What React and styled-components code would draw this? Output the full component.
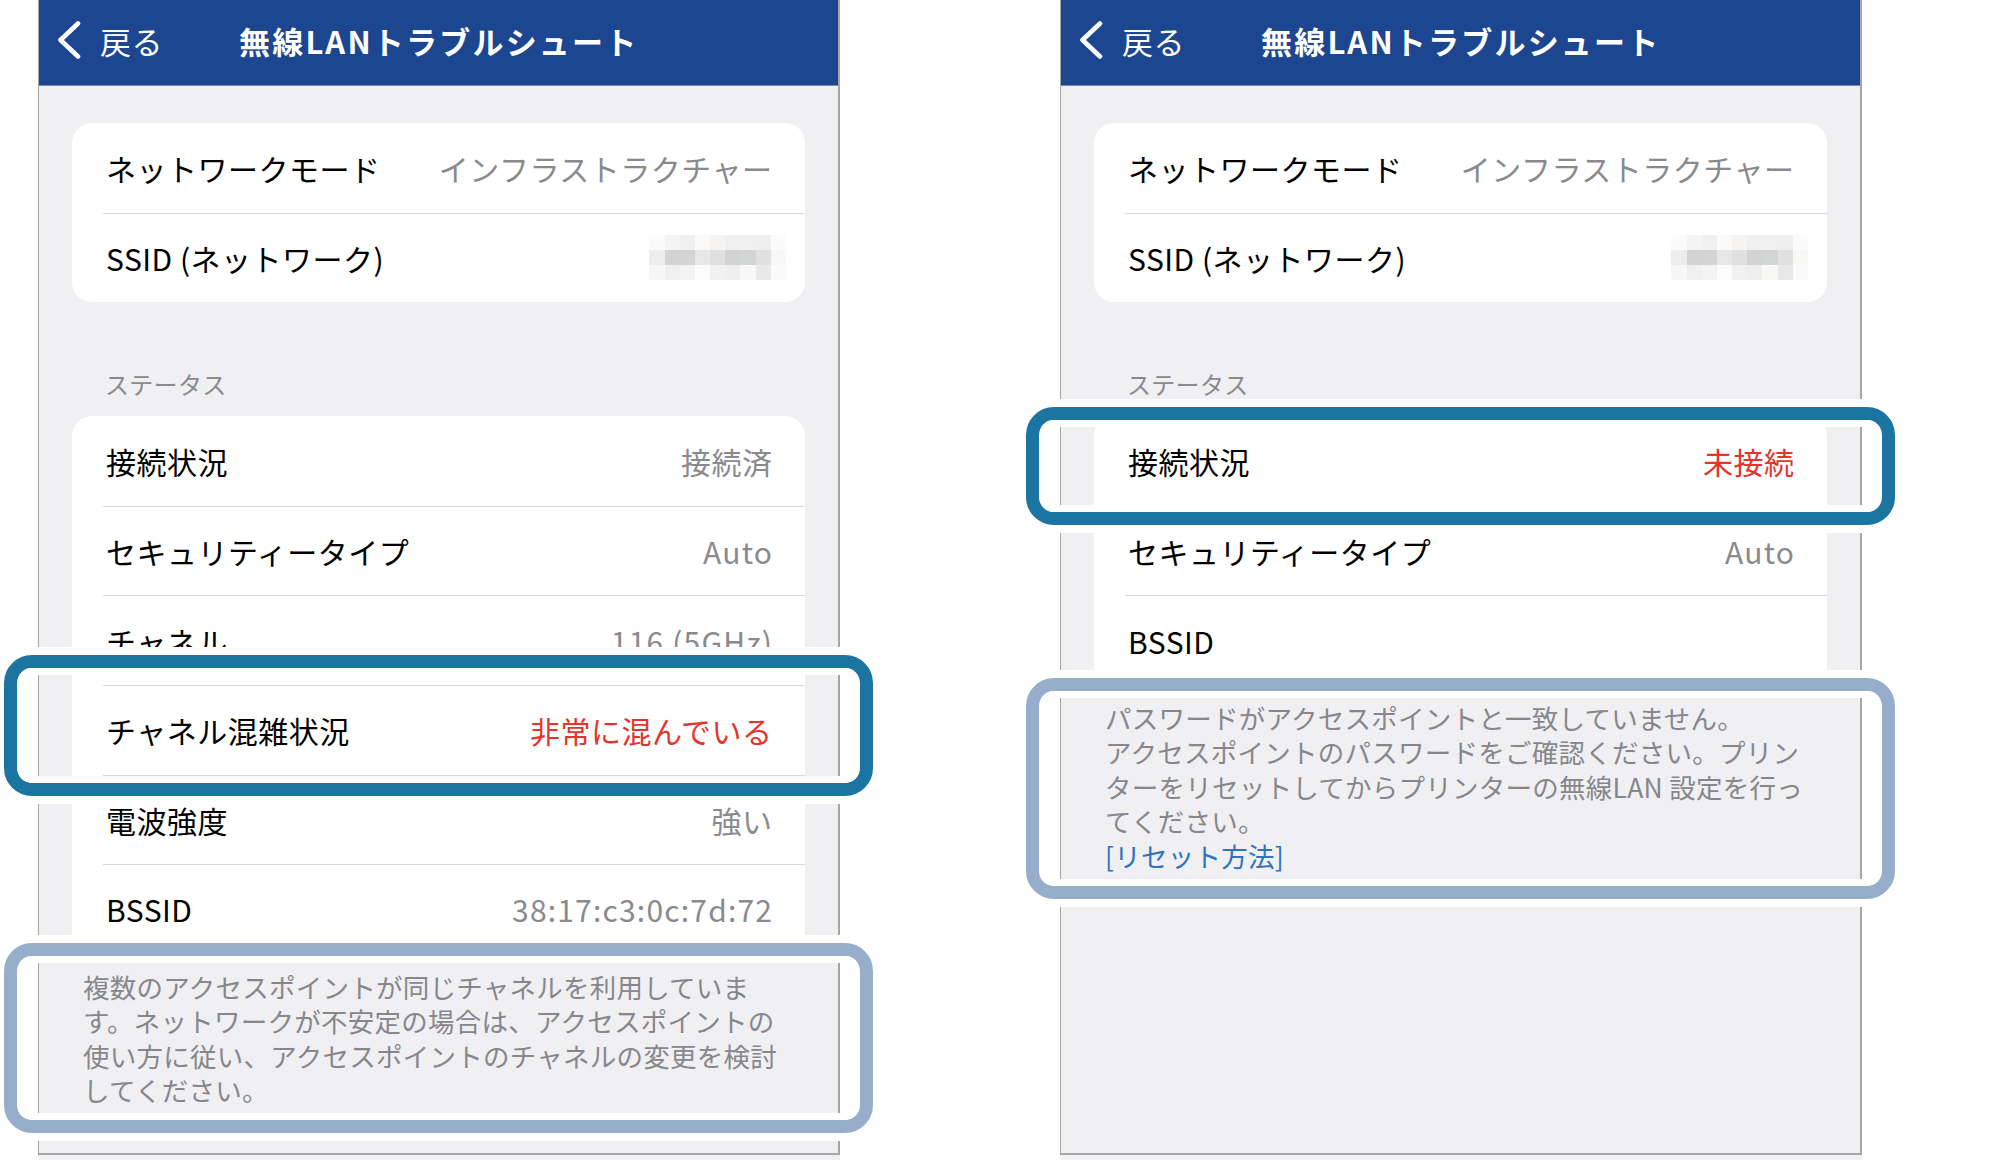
import React from "react";
import styled, { createGlobalStyle } from "styled-components";

const GlobalStyle = createGlobalStyle`
  html, body {
    margin: 0;
    background: #fff;
  }
  body {
    font-family: "Noto Sans CJK JP", "Noto Sans", sans-serif;
  }
`;

const Page = styled.div`
  display: flex;
  align-items: flex-start;
  gap: 220px;
  padding-left: 38px;
  height: 1160px;
  overflow: hidden;
`;

const Phone = styled.div`
  position: relative;
  box-sizing: border-box;
  width: 802px;
  height: 1155px;
  flex: none;
  display: flex;
  flex-direction: column;
  background: #f0f0f3;
  border-left: 1px solid #a6a6a8;
  border-right: 2px solid #a6a6a8;
  border-bottom: 2px solid #a6a6a8;
  box-shadow: 0 5px 0 #f1f1f3;
`;

const NavBar = styled.header`
  height: 86px;
  box-sizing: border-box;
  flex: none;
  display: flex;
  align-items: center;
  padding-left: 18px;
  background: #1d4690;
  border-bottom: 1px solid #7f8ba5;
  color: #fff;
`;

const Back = styled.div`
  width: 182px;
  display: flex;
  align-items: center;
  gap: 19px;
  font-size: 31px;
  margin-top: -5px;
  letter-spacing: 0.5px;
`;

const Title = styled.h1`
  margin: -5px 0 0;
  font-size: 31px;
  font-weight: 700;
  letter-spacing: 2.2px;
`;

const Group = styled.section`
  margin: ${(p) => p.$top || 0}px 33px 0;
  background: #fff;
  border-radius: 20px;
  overflow: hidden;
`;

const Row = styled.div`
  height: 89.6px;
  box-sizing: border-box;
  margin-left: 31px;
  padding: 0 33px 0 3px;
  display: flex;
  align-items: center;
  justify-content: space-between;
  font-size: 30px;
  letter-spacing: 0.5px;
  color: #000;

  & + & {
    border-top: 1px solid #dcdce0;
  }
`;

const Value = styled.span`
  color: ${(p) => (p.$alert ? "#e5342c" : "#8a8a8e")};
  letter-spacing: ${(p) => (p.$latin ? "1.2px" : "0.5px")};
  margin-right: ${(p) => (p.$latin ? "-1.2px" : "-0.5px")};
`;

const SectionLabel = styled.div`
  margin: 67px 0 17px 66px;
  font-size: 24px;
  line-height: 30px;
  letter-spacing: 0.3px;
  color: #8a8a8e;
`;

const Note = styled.p`
  margin: 0;
  padding: 16px 0 0 44px;
  font-size: 26.5px;
  line-height: 34.4px;
  letter-spacing: 0.25px;
  color: #87878b;
  white-space: nowrap;
`;

const NoteLink = styled.span`
  color: #2e72c2;
`;

const Mosaic = styled.div`
  display: grid;
  grid-template-columns: repeat(9, 15.2px);
  grid-auto-rows: 15px;
  margin-right: -14px;
`;

const Tile = styled.span`
  background: ${(p) => p.$c};
`;

const Highlight = styled.div`
  position: absolute;
  left: -35px;
  width: 869px;
  top: ${(p) => p.$top}px;
  height: ${(p) => p.$height}px;
  box-sizing: border-box;
  border: 13px solid ${(p) => (p.$tone === "strong" ? "#1c75a1" : "#97aeca")};
  border-radius: 28px;
  box-shadow: 0 0 0 8px #fff;
  overflow: hidden;
  pointer-events: none;
  z-index: 2;

  &::before,
  &::after {
    content: "";
    position: absolute;
    left: 0;
    right: 0;
    height: 7px;
    background: #fff;
  }
  &::before {
    top: 0;
  }
  &::after {
    bottom: 0;
  }
`;

const mosaicColors = [
  "#fbfbfb", "#f4f4f3", "#eff0f0", "#fbfaf8", "#f5f4f3", "#f0f0f0", "#f0f0f0", "#efefef", "#fbfbfb",
  "#eceeee", "#d3d3d3", "#d4d4d4", "#e6e7e7", "#e0e0e0", "#d2d3d4", "#d4d5d5", "#e0e0e0", "#f8f8f6",
  "#f7f7f5", "#f0f0f0", "#f3f3f1", "#fcfcfc", "#f1f1f1", "#efefef", "#f8f8f6", "#e9e9e9", "#fafafa",
];

function Chevron() {
  return (
    <svg width="24" height="38" viewBox="0 0 24 38">
      <polyline
        points="21,2.5 3.5,19 21,35.5"
        fill="none"
        stroke="#fff"
        strokeWidth="4.6"
        strokeLinecap="round"
        strokeLinejoin="round"
      />
    </svg>
  );
}

const phones = [
  {
    status: [
      { label: "接続状況", value: "接続済" },
      { label: "セキュリティータイプ", value: "Auto", latin: true },
      { label: "チャネル", value: "116 (5GHz)", latin: true },
      { label: "チャネル混雑状況", value: "非常に混んでいる", alert: true },
      { label: "電波強度", value: "強い" },
      { label: "BSSID", value: "38:17:c3:0c:7d:72", latin: true },
    ],
    note: [
      "複数のアクセスポイントが同じチャネルを利用していま",
      "す。ネットワークが不安定の場合は、アクセスポイントの",
      "使い方に従い、アクセスポイントのチャネルの変更を検討",
      "してください。",
    ],
    frames: [
      { top: 655, height: 141, tone: "strong" },
      { top: 943, height: 190, tone: "soft" },
    ],
  },
  {
    status: [
      { label: "接続状況", value: "未接続", alert: true },
      { label: "セキュリティータイプ", value: "Auto", latin: true },
      { label: "BSSID", value: "" },
    ],
    note: [
      "パスワードがアクセスポイントと一致していません。",
      "アクセスポイントのパスワードをご確認ください。プリン",
      "ターをリセットしてからプリンターの無線LAN 設定を行っ",
      "てください。",
    ],
    link: "[リセット方法]",
    frames: [
      { top: 407, height: 118, tone: "strong" },
      { top: 678, height: 221, tone: "soft" },
    ],
  },
];

function Screen({ data }) {
  return (
    <Phone>
      <NavBar>
        <Back>
          <Chevron />
          戻る
        </Back>
        <Title>無線LANトラブルシュート</Title>
      </NavBar>

      <Group $top={37}>
        <Row>
          ネットワークモード
          <Value>インフラストラクチャー</Value>
        </Row>
        <Row>
          SSID (ネットワーク)
          <Mosaic>
            {mosaicColors.map((c, i) => (
              <Tile key={i} $c={c} />
            ))}
          </Mosaic>
        </Row>
      </Group>

      <SectionLabel>ステータス</SectionLabel>

      <Group>
        {data.status.map((item) => (
          <Row key={item.label}>
            {item.label}
            <Value $alert={item.alert} $latin={item.latin}>
              {item.value}
            </Value>
          </Row>
        ))}
      </Group>

      <Note>
        {data.note.map((line, i) => (
          <React.Fragment key={i}>
            {line}
            <br />
          </React.Fragment>
        ))}
        {data.link && <NoteLink>{data.link}</NoteLink>}
      </Note>

      {data.frames.map((f, i) => (
        <Highlight key={i} $top={f.top} $height={f.height} $tone={f.tone} />
      ))}
    </Phone>
  );
}

export default function App() {
  return (
    <>
      <GlobalStyle />
      <Page>
        {phones.map((p, i) => (
          <Screen key={i} data={p} />
        ))}
      </Page>
    </>
  );
}
